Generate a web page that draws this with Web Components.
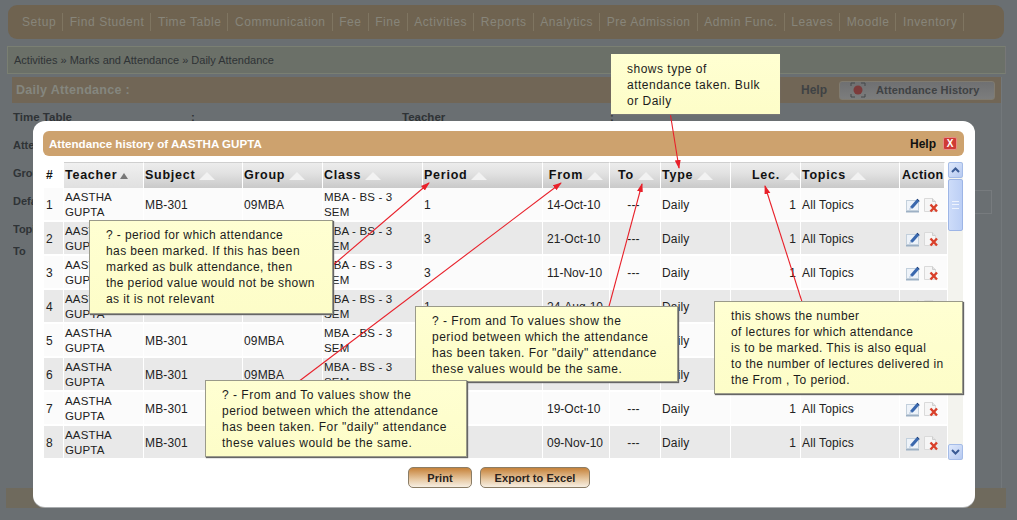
<!DOCTYPE html>
<html>
<head>
<meta charset="utf-8">
<title>Attendance history</title>
<style>
html, body { margin: 0; padding: 0; background: #6a6f72; overflow: hidden; }
body { width: 1017px; height: 520px; position: relative; font-family: "Liberation Sans", Arial, sans-serif; }
</style>
</head>
<body>
<back-page></back-page>
<att-modal name="AASTHA GUPTA"></att-modal>
<arrow-layer></arrow-layer>
<note-box style="left:611px;top:54px;width:169px;height:60px;" flat>shows type of<br>attendance taken. Bulk<br>or Daily</note-box>
<note-box style="left:89px;top:220px;width:244px;height:94px;">? - period for which attendance<br>has been marked. If this has been<br>marked as bulk attendance, then<br>the period value would not be shown<br>as it is not relevant</note-box>
<note-box style="left:415px;top:306px;width:263px;height:76px;letter-spacing:.5px;">? - From and To values show the<br>period between which the attendance<br>has been taken. For "daily" attendance<br>these values would be the same.</note-box>
<note-box style="left:205px;top:380px;width:262px;height:77px;letter-spacing:.5px;">? - From and To values show the<br>period between which the attendance<br>has been taken. For "daily" attendance<br>these values would be the same.</note-box>
<note-box style="left:714px;top:301px;width:249px;height:93px;">this shows the number<br>of lectures for which attendance<br>is to be marked. This is also equal<br>to the number of lectures delivered in<br>the From , To period.</note-box>

<script>
class BackPage extends HTMLElement {
    constructor() {
        super();
        this.attachShadow({ mode: 'open' });
        const menu = ['Setup', 'Find Student', 'Time Table', 'Communication', 'Fee', 'Fine', 'Activities', 'Reports',
            'Analytics', 'Pre Admission', 'Admin Func.', 'Leaves', 'Moodle', 'Inventory'];
        const labels = ['Attendance', 'Group', 'Default', 'Topics'];
        this.shadowRoot.innerHTML = `
            <style>
                :host { display: flex; flex-direction: column; width: 1017px; height: 520px; padding: 5px 11px 0 7px; box-sizing: border-box; color: #2f3336; font-size: 12px; }
                nav { height: 34px; margin: 0 2px 0 1px; background: #6f6350; border-radius: 9px; display: flex; align-items: center; padding-left: 11px; color: #87857a; font-size: 12px; letter-spacing: .55px; }
                nav span { padding: 0 6px 0 6.6px; border-right: 1px solid #7f7561; line-height: 18px; white-space: nowrap; }
                nav span:first-child { padding-left: 3px; }
                .crumb { height: 26px; margin-top: 7px; background: #6b7068; border: 1px solid #7a7f72; border-right-color: #777; display: flex; align-items: center; padding-left: 6px; font-size: 11px; box-sizing: content-box; color: #2f3336; width: 991px; }
                .panel { margin: 3px 4px 0 5px; flex: 0 0 auto; height: 411px; display: flex; flex-direction: column; background: #6a6f72; border-right: 1px solid #73787b; }
                .head { height: 26px; background: #716656; display: flex; align-items: center; padding-left: 4px; color: #85867f; font-weight: bold; font-size: 12.5px; letter-spacing: .3px; }
                .head b { flex: 1; }
                .help { color: #3f4244; margin-right: 12px; font-size: 12px; letter-spacing: 0; }
                .hist { width: 156px; height: 19px; margin-right: 6px; border: 1px solid #807b70; border-radius: 3px; background: linear-gradient(#6f7072, #7c7d7d); display: flex; align-items: center; gap: 10px; padding-left: 10px; box-sizing: border-box; color: #3f4244; font-size: 11px; letter-spacing: .15px; }
                .rows { flex: 1; position: relative; display: flex; flex-direction: column; padding-left: 1px; }
                .first { display: flex; height: 28px; align-items: center; font-weight: bold; font-size: 11.5px; }
                .left { display: flex; flex-direction: column; gap: 15px; margin-top: 8px; font-weight: bold; font-size: 11px; line-height: 13px; width: 20px; overflow: hidden; white-space: nowrap; }
                .left .to { margin-top: -6px; }
                .box { position: absolute; right: 9px; top: 87px; width: 40px; height: 22px; border: 1px solid #777b7e; }
            </style>
            <nav>${menu.map(m => `<span>${m}</span>`).join('')}</nav>
            <div class="crumb">Activities » Marks and Attendance » Daily Attendance</div>
            <div class="panel">
                <div class="head">
                    <b>Daily Attendance :</b>
                    <span class="help">Help</span>
                    <div class="hist">
                        <svg width="16" height="16" viewBox="0 0 16 16"><circle cx="8" cy="8" r="4.5" fill="#7c3b3b"/><path d="M1 4V1h4M11 1h4v3M1 12v3h4M11 15h4v-3" fill="none" stroke="#45484a"/></svg>
                        <span>Attendance History</span>
                    </div>
                </div>
                <div class="rows">
                    <div class="first"><span style="width:178px">Time Table</span><span style="width:211px">:</span><span style="width:208px">Teacher</span><span>:</span></div>
                    <div class="left">${labels.map(l => `<span>${l}</span>`).join('')}<span class="to">To</span></div>
                    <div class="box"></div>
                </div>
            </div>
            <div style="position:absolute;left:6px;top:488px;width:1000px;height:20px;background:#6f6a5d"></div>
        `;
    }
}
customElements.define('back-page', BackPage);

class IconEdit extends HTMLElement {
    constructor() {
        super();
        this.attachShadow({ mode: 'open' });
        this.shadowRoot.innerHTML = `
            <style>:host { display: block; width: 16px; height: 16px; }</style>
            <svg width="16" height="16" viewBox="0 0 16 16">
                <rect x="1.5" y="3.5" width="12" height="10" fill="#eef3f9" stroke="#c3d0dc"/>
                <path d="M1 14h13v1.5H1z" fill="#9db0c4"/>
                <path d="M4.5 12.5l1.2-3.2 6.3-7.3 2.4 2-6.4 7.2z" fill="#3a68ae"/>
                <path d="M12 2l2.4 2" stroke="#1c3a6e"/>
                <path d="M4.5 12.5l.9-2.4 1.8 1.3z" fill="#c7d4e6"/>
            </svg>`;
    }
}
customElements.define('icon-edit', IconEdit);

class IconDelete extends HTMLElement {
    constructor() {
        super();
        this.attachShadow({ mode: 'open' });
        this.shadowRoot.innerHTML = `
            <style>:host { display: block; width: 16px; height: 16px; }</style>
            <svg width="16" height="16" viewBox="0 0 16 16">
                <path d="M1.5 1.5h8l3 3v10h-11z" fill="#f6f6f6" stroke="#dadada"/>
                <path d="M9.5 1.5v3h3" fill="#e4e4e4" stroke="#cecece"/>
                <path d="M7.5 7.5l6.5 7M14 7.5l-6.5 7" stroke="#d9402a" stroke-width="2.4"/>
            </svg>`;
    }
}
customElements.define('icon-delete', IconDelete);

class AttTable extends HTMLElement {
    constructor() {
        super();
        this.attachShadow({ mode: 'open' });
        const cols = [
            { t: '#', a: 0 }, { t: 'Teacher', a: 2 }, { t: 'Subject', a: 1 }, { t: 'Group', a: 1 }, { t: 'Class', a: 1 },
            { t: 'Period', a: 1 }, { t: 'From', a: 1, c: 'r p' }, { t: 'To', a: 1, c: 'c' }, { t: 'Type', a: 1 },
            { t: 'Lec.', a: 1, c: 'r' }, { t: 'Topics', a: 1 }, { t: 'Action', a: 0 }
        ];
        const data = [
            [1, '14-Oct-10'], [3, '21-Oct-10'], [3, '11-Nov-10'], [1, '24-Aug-10'],
            [1, '25-Aug-10'], [1, '26-Aug-10'], [1, '19-Oct-10'], [1, '09-Nov-10']
        ];
        const head = cols.map(c => `<div class="th ${c.c || ''} ${c.a === 2 ? 'on' : ''}"><span>${c.t}</span>${
            c.a === 2 ? '<u class="sm"></u>' : c.a === 1 ? '<u></u>' : ''}</div>`).join('');
        const rows = data.map((d, i) => `
            <div class="row ${i % 2 ? 'even' : ''}">
                <div>${i + 1}</div>
                <div class="who">AASTHA<br>GUPTA</div>
                <div>MB-301</div>
                <div>09MBA</div>
                <div class="who">MBA - BS - 3<br>SEM</div>
                <div>${d[0]}</div>
                <div class="from">${d[1]}</div>
                <div class="to">---</div>
                <div>Daily</div>
                <div class="lec">1</div>
                <div>All Topics</div>
                <div class="act"><icon-edit></icon-edit><icon-delete></icon-delete></div>
            </div>`).join('');
        this.shadowRoot.innerHTML = `
            <style>
                :host { display: block; width: 903px; color: #222; font-size: 12px; letter-spacing: .15px; line-height: 15px; --cols: 20px 80px 99px 80px 100px 120px 67px 51px 70px 70px 99px 45px; }
                .hd, .row { display: grid; grid-template-columns: var(--cols); }
                .hd { height: 26px; }
                .th { display: flex; align-items: center; background: linear-gradient(#ececec, #e2e2e2 40%, #c9c9c9); border-top: 1px solid #cfcfcf; border-right: 1px solid #fff; box-sizing: border-box; padding-left: 1px; font-weight: bold; font-size: 12.5px; letter-spacing: .75px; color: #111; }
                .th:first-child { background: none; border-top-color: transparent; padding-left: 2px; font-size: 12px; }
                .th.on { background: linear-gradient(#f0f0f0, #e0e0e0); }
                .th.r { justify-content: flex-end; }
                .th.p { padding-right: 6px; }
                .th.c { padding-left: 8px; }
                .th:last-child { padding-left: 2px; letter-spacing: .45px; }
                .th u { display: block; width: 0; height: 0; margin-left: 4px; border-style: solid; border-width: 0 8px 8px; border-color: transparent transparent #f2f2f2; }
                .th u.sm { border-width: 0 4px 6px; border-bottom-color: #777; margin-left: 3px; }
                .row { height: 32px; margin-bottom: 2px; background: #fbfbfb; }
                .row.even { background: #e9e9e9; }
                .row > div { display: flex; flex-direction: column; justify-content: center; padding: 2px 0 0 1px; border-right: 1px solid #fff; box-sizing: border-box; white-space: nowrap; }
                .row > div:first-child { padding-left: 2px; }
                .row > .who { font-size: 11.5px; }
                .row > .from { padding-left: 4px; letter-spacing: 0; }
                .row > .to { align-items: center; padding-right: 4px; }
                .row > .lec { align-items: flex-end; padding-right: 4px; }
                .row > .act { flex-direction: row; justify-content: flex-start; align-items: center; gap: 2px; padding-left: 5px; border-right: 0; }
            </style>
            <div class="hd">${head}</div>
            ${rows}
        `;
    }
}
customElements.define('att-table', AttTable);

class ScrollRail extends HTMLElement {
    constructor() {
        super();
        this.attachShadow({ mode: 'open' });
        const chev = d => `<svg width="9" height="6" viewBox="0 0 9 6"><path d="${d}" fill="none" stroke="#3a5a94" stroke-width="2"/></svg>`;
        this.shadowRoot.innerHTML = `
            <style>
                :host { display: flex; flex-direction: column; width: 15px; height: 298px; background: #f3f3ee; box-sizing: border-box; }
                .btn { height: 16px; flex: 0 0 16px; background: linear-gradient(135deg, #dfe9fc, #b6c9f0); border: 1px solid #a5bce8; border-radius: 2px; box-sizing: border-box; display: flex; align-items: center; justify-content: center; }
                .thumb { height: 52px; margin-top: 1px; background: linear-gradient(90deg, #cddcf9, #bccff5); border: 1px solid #9db5e6; border-radius: 2px; box-sizing: border-box; display: flex; align-items: center; justify-content: center; }
                .grip { width: 7px; height: 6px; border-top: 1px solid #eef3fd; border-bottom: 1px solid #eef3fd; position: relative; }
                .grip::after { content: ""; position: absolute; left: 0; right: 0; top: 2px; height: 1px; background: #eef3fd; }
                .fill { flex: 1; }
            </style>
            <div class="btn">${chev('M1 5l3.5-3.5L8 5')}</div>
            <div class="thumb"><div class="grip"></div></div>
            <div class="fill"></div>
            <div class="btn">${chev('M1 1l3.5 3.5L8 1')}</div>
        `;
    }
}
customElements.define('scroll-rail', ScrollRail);

class PillButton extends HTMLElement {
    constructor() {
        super();
        this.attachShadow({ mode: 'open' });
        this.shadowRoot.innerHTML = `
            <style>
                :host { display: flex; align-items: center; justify-content: center; height: 21px; box-sizing: border-box; border: 1px solid #8b7d66; border-radius: 5px; background: linear-gradient(#c6823a, #e7c9a3 60%, #f7efe3); font-weight: bold; font-size: 11px; letter-spacing: .05px; color: #2a2320; }
            </style>
            <slot></slot>`;
    }
}
customElements.define('pill-button', PillButton);

class AttModal extends HTMLElement {
    constructor() {
        super();
        this.attachShadow({ mode: 'open' });
        this.shadowRoot.innerHTML = `
            <style>
                :host { position: absolute; left: 33px; top: 121px; width: 942px; height: 386px; box-sizing: border-box; padding: 10px 11px 0 10px; background: #fff; border-radius: 12px; box-shadow: 0 1px 0 #a9acae; display: flex; flex-direction: column; }
                .title { height: 25px; background: #cda26e; border-radius: 6px; display: flex; align-items: center; padding: 0 7px 0 6px; color: #fff; font-weight: bold; font-size: 11.6px; flex: 0 0 auto; }
                .title b { flex: 1; }
                .help { color: #111; margin-right: 7px; font-size: 12px; }
                .x { width: 14px; height: 13px; background: #cf3a35; border-radius: 2px; border: 1px solid #e78b84; box-sizing: border-box; color: #fff; font-size: 10px; line-height: 11px; text-align: center; }
                .body { display: flex; margin-top: 6px; margin-left: 1px; gap: 1px; }
                .foot { display: flex; justify-content: flex-start; gap: 8px; margin: 7px 0 0 365px; }
            </style>
            <div class="title">
                <b>Attendance history of ${this.getAttribute('name')}</b>
                <span class="help">Help</span>
                <span class="x">X</span>
            </div>
            <div class="body">
                <att-table></att-table>
                <scroll-rail></scroll-rail>
            </div>
            <div class="foot">
                <pill-button style="width:64px">Print</pill-button>
                <pill-button style="width:110px">Export to Excel</pill-button>
            </div>
        `;
    }
}
customElements.define('att-modal', AttModal);

class ArrowLayer extends HTMLElement {
    constructor() {
        super();
        this.attachShadow({ mode: 'open' });
        // x1,y1 = tail at the note, x2,y2 = tip at the column header
        const arrows = [
            [670, 112, 679, 168],
            [332, 266, 429, 183],
            [298, 382, 561, 183],
            [608, 310, 642, 184],
            [803, 305, 765, 186]
        ];
        const lines = arrows.map(a => `<line x1="${a[0]}" y1="${a[1]}" x2="${a[2]}" y2="${a[3]}" stroke="#e8202a" stroke-width="1.1" marker-end="url(#tip)"/>`).join('');
        this.shadowRoot.innerHTML = `
            <style>:host { position: absolute; left: 0; top: 0; width: 1017px; height: 520px; pointer-events: none; }</style>
            <svg width="1017" height="520" viewBox="0 0 1017 520">
                <defs>
                    <marker id="tip" markerUnits="userSpaceOnUse" markerWidth="9" markerHeight="7" refX="8" refY="3" orient="auto">
                        <path d="M0 0L9 3L0 6z" fill="#e8202a"/>
                    </marker>
                </defs>
                ${lines}
            </svg>`;
    }
}
customElements.define('arrow-layer', ArrowLayer);

class NoteBox extends HTMLElement {
    constructor() {
        super();
        this.attachShadow({ mode: 'open' });
        this.shadowRoot.innerHTML = `
            <style>
                :host { position: absolute; box-sizing: border-box; padding: 6px 0 0 16px; background: linear-gradient(#ffffd2, #fdfdc8); border: 1px solid #9a9a8a; box-shadow: 1px 1px 1px #666; color: #1c1c1c; font-size: 12px; line-height: 16px; letter-spacing: .4px; white-space: nowrap; }
                :host([flat]) { border: 0; box-shadow: 0 1px 1px #777; padding: 7px 0 0 16px; letter-spacing: .5px; }
            </style>
            <slot></slot>`;
    }
}
customElements.define('note-box', NoteBox);
</script>
</body>
</html>
